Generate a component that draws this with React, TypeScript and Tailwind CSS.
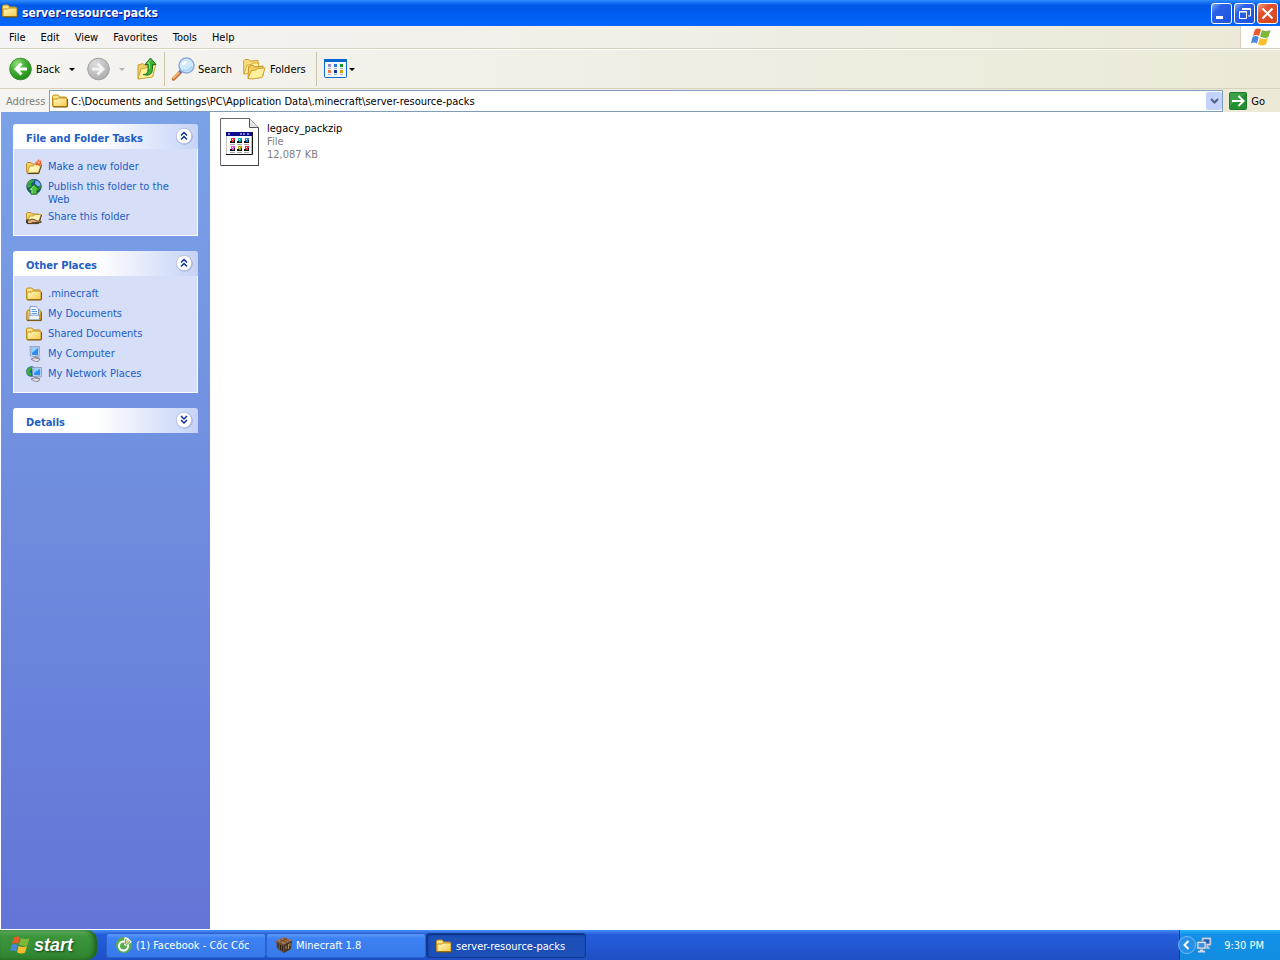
import type { ReactNode } from 'react';

function FolderIcon({ className = 'size-4' }: { className?: string }) {
  return (
    <svg viewBox="0 0 16 16" className={className} aria-hidden="true">
      <defs>
        <linearGradient id="folderFill" x1="0" y1="0" x2="1" y2="1">
          <stop offset="0" stopColor="#fffcc4" />
          <stop offset="1" stopColor="#f5c84c" />
        </linearGradient>
      </defs>
      <path d="M.5 13V3.500q0-1.500 1.500-1.500h3.500q1 0 1.500 1l.5 1h5.500q1.500 0 1.500 1.500V13z" fill="#fbe48a" stroke="#c08c14" />
      <path d="M1 13.500V7q0-1 1-1h3.500l1.300-1H14q1 0 1 1v7.500z" fill="url(#folderFill)" stroke="#c08c14" />
      <path d="M1.500 14h13.200q.8 0 .8-.8V6" fill="none" stroke="#7d5500" />
    </svg>
  );
}

function OpenFolder({ children }: { children?: ReactNode }) {
  return (
    <svg viewBox="0 0 16 16" className="size-4 shrink-0" aria-hidden="true">
      <path d="M.8 13.500L.5 4.500l1-1h3.500l1.500 1.500h6v8.500z" fill="#f5d36c" stroke="#b5851c" />
      <path d="M1.500 14L3.500 7h4l1-1.500h6.700L12.500 13.500z" fill="#fff5b0" stroke="#c29631" strokeWidth=".9" />
      <path d="M1.500 14.600h11.200L15.600 6" fill="none" stroke="#4a3d16" />
      {children}
    </svg>
  );
}

function NewFolderIcon() {
  return (
    <OpenFolder>
      <path d="M12.500 0l.9 2 2.200-.5-1 2 1.400 1.500-2 .4-.5 2-1.500-1.400-2 .6.600-2L9 3l2.300-.4z" fill="#f4511e" />
      <circle cx="12.700" cy="3.500" r="1.300" fill="#ffb36b" />
    </OpenFolder>
  );
}

function ShareFolderIcon() {
  return (
    <OpenFolder>
      <path d="M1 11h3l2-1 3.500 1 1.500 1h4v1.500H7L5 14.500H1z" fill="#e2ae78" stroke="#3d2c18" strokeWidth=".8" />
      <path d="M0 10.500h2v3.500H0z" fill="#3d3a3c" />
    </OpenFolder>
  );
}

function PublishIcon() {
  return (
    <svg viewBox="0 0 16 16" className="size-4 shrink-0" aria-hidden="true">
      <circle cx="8" cy="7.500" r="7.300" fill="#1c4f93" stroke="#143d63" strokeWidth=".7" />
      <path d="M3 2Q5 .5 8 .8L7.500 3 5 4.500 5.500 7 3 9 .9 8Q.5 4 3 2z" fill="#35a83a" />
      <path d="M9.500 1.200q4 1 5.300 5L12 7.500 9 5z" fill="#79b5ec" />
      <path d="M12 8l3-1.500q0 3-1.500 4.500z" fill="#2d9332" />
      <path d="M8 5.500l6 5.700h-3v4H5v-4H2z" fill="#4cc13c" stroke="#12651a" strokeWidth=".9" />
      <path d="M8 7L4.500 10.500H6V14.500" fill="none" stroke="#a6ea8c" strokeWidth=".9" />
    </svg>
  );
}

function DocumentsIcon() {
  return (
    <svg viewBox="0 0 16 16" className="size-4 shrink-0" aria-hidden="true">
      <path d="M.8 14V5.500L2.500 4H13.500l1.700 1.500V14z" fill="#f3c94f" stroke="#a87408" />
      <path d="M4 10V.6h6L12.500 3v7z" fill="#fff" stroke="#6b93c9" strokeWidth=".9" />
      <path d="M5.500 3.500h4.500M5.500 5.500h5.500M5.500 7.500h5.500" stroke="#4f9ae8" />
      <path d="M3 13.800V9.200h10.500v4.600z" fill="#f0f5fc" stroke="#6c8fba" strokeWidth=".8" />
      <path d="M1 14.600h14.300V6.500" fill="none" stroke="#7d5500" />
    </svg>
  );
}

function ComputerIcon({ globe = false }: { globe?: boolean }) {
  return (
    <svg viewBox="0 0 16 16" className="size-4 shrink-0" aria-hidden="true">
      {globe && (
        <>
          <circle cx="5.500" cy="5.500" r="5.300" fill="#1f59b0" />
          <path d="M1 3.500Q3 .5 6 .5L5 4 3.500 5.500l2 2L5 10Q1 9.500.3 6z" fill="#38b03c" />
        </>
      )}
      <path d={globe ? 'M6 1.500h9.500v9.500L7 10.500z' : 'M4 .6h9.500L13 11l-8.500-1z'} fill="#d3dcec" stroke="#8592ad" strokeWidth=".8" />
      <path d={globe ? 'M7.200 2.700h7v6.800l-6-.5z' : 'M5.300 1.800h7l-.4 7.700-6-.8z'} fill="#2e8df2" />
      <path d={globe ? 'M7.200 2.700h7L8 7z' : 'M5.300 1.800h7L5.900 7z'} fill="#8fd0ff" />
      <path d="M8 10.800l4.500.4v2l-4-.4z" fill="#8c93aa" />
      <path d="M5 13l3.500-1.200 5.500 1-1.500 2.400-3 .6z" fill="#e2dde2" stroke="#77707f" strokeWidth=".8" />
    </svg>
  );
}

function WindowsFlag({ className }: { className: string }) {
  return (
    <svg viewBox="0 0 20 18" className={className} aria-hidden="true">
      <path d="M4 1.500Q7-.5 10 1.500L8 8Q5 6.200 1.800 8z" fill="#e9592b" />
      <path d="M11 2Q15 4 19.500 2L17.500 9Q13.500 11 9 8.500z" fill="#7db83b" />
      <path d="M1.500 9Q4.500 7.200 7.700 9L6 15.500Q3 13.700 0 15.500z" fill="#4887dc" />
      <path d="M8.700 9.700Q12.500 12 17 10L15 16.500Q11 18.500 7 16.200z" fill="#f6bf2b" />
    </svg>
  );
}

function RoundArrow({ back = false }: { back?: boolean }) {
  return (
    <svg viewBox="0 0 24 24" className="size-6 shrink-0" aria-hidden="true">
      <defs>
        <radialGradient id="backFill" cx=".35" cy=".25" r=".8">
          <stop offset="0" stopColor="#8ede73" />
          <stop offset=".5" stopColor="#41ae32" />
          <stop offset="1" stopColor="#1a8b17" />
        </radialGradient>
        <radialGradient id="forwardFill" cx=".35" cy=".25" r=".8">
          <stop offset="0" stopColor="#dcdcdc" />
          <stop offset="1" stopColor="#adadad" />
        </radialGradient>
      </defs>
      <circle cx="12.500" cy="12" r="10.800" fill={back ? 'url(#backFill)' : 'url(#forwardFill)'} stroke={back ? '#3d8f34' : '#a0a0a0'} />
      <path
        d={back ? 'M19 12H8M13.500 6.500L8 12l5.500 5.500' : 'M6 12H17M11.500 6.500L17 12l-5.500 5.500'}
        fill="none"
        stroke={back ? '#fff' : '#f4f4f4'}
        strokeWidth="3"
      />
    </svg>
  );
}

function UpFolderIcon() {
  return (
    <svg viewBox="0 0 22 24" className="h-6 w-[22px]" aria-hidden="true">
      <path d="M2 22V8l5-1.500 2 2 8-1V19z" fill="#f2cf66" stroke="#c79c31" />
      <path d="M2 22L5 12l5-1 1.500-1.500 8-1L16.500 20z" fill="#fff0a0" stroke="#d1a63b" />
      <path d="M7 17.500q5 .5 5-5V7.500H9L14.500 1 20 7.500h-3.500v5q-.5 7.500-9.500 5z" fill="#3fb333" stroke="#1a7420" />
      <path d="M14.500 2.800L11.500 6.500h2v5.500" fill="none" stroke="#93e07a" />
    </svg>
  );
}

function SearchIcon() {
  return (
    <svg viewBox="0 0 24 24" className="size-6" aria-hidden="true">
      <path d="M10 14.500L2.500 22" stroke="#c4703a" strokeWidth="3.500" strokeLinecap="round" />
      <path d="M9.500 14L2.500 21" stroke="#fbb070" strokeWidth="2" strokeLinecap="round" />
      <path d="M11 12.500L8.500 15.500" stroke="#5c7cb5" strokeWidth="3" />
      <circle cx="15.500" cy="8.500" r="7.500" fill="#cfeafd" stroke="#8fa9dc" strokeWidth="1.500" />
      <path d="M10.500 9q0-5 6-5.500-1 4-6 5.500z" fill="#fff" />
      <path d="M12 13.200q6 2 9-4" fill="none" stroke="#a4d5f7" strokeWidth="1.500" />
    </svg>
  );
}

function FoldersIcon() {
  return (
    <svg viewBox="0 0 24 24" className="size-6" aria-hidden="true">
      <path d="M.8 17L.5 4 2 2.500h3.500l1.500 1.500 8-.5V14z" fill="#f9dc79" stroke="#cf9f2d" />
      <path d="M1 17L4 8l4.500-.5L10 6h6l-2 9z" fill="#fff2a8" stroke="#d5a834" />
      <path d="M5 21.500L5.500 9.500 10 8l2 2 8-1V19z" fill="#f2cb5c" stroke="#c5932a" />
      <path d="M5 21.500L8.500 13.500l4.500-.5 1.500-1.500 7.500-.5L19 20.500 9 22z" fill="#fff0a0" stroke="#cf9f2d" />
    </svg>
  );
}

function ViewsIcon() {
  return (
    <svg viewBox="0 0 23 20" className="h-5 w-[23px]" aria-hidden="true">
      <rect x=".5" y=".5" width="22" height="18" rx="1" fill="#f6f8fd" stroke="#0b68d1" />
      <path d="M0 0h23v3H0z" fill="#0b68d1" />
      <path d="M4 5h3v3H4z" fill="#9b8bd0" />
      <path d="M10 5h3v3h-3z" fill="#1f78dd" />
      <path d="M16 5h3v3h-3z" fill="#0b9a20" />
      <path d="M4 11h3v3H4z" fill="#ff7443" />
      <path d="M10 11h3v3h-3z" fill="#0c389d" />
      <path d="M16 11h3v3h-3z" fill="#d4a000" />
      <path d="M4 9.500h3m3 0h3m3 0h3M4 15.500h3m3 0h3m3 0h3" stroke="#a9b1bd" />
    </svg>
  );
}

function PackIcon() {
  const dots = ['#f02828', '#10b0b8', '#2080e8', '#f048f0', '#b8a818', '#f02840'];
  return (
    <svg viewBox="0 0 39 48" className="h-12 w-[39px]" aria-hidden="true">
      <path d="M.5.500h29l9 9v38H.5z" fill="#fff" stroke="#6a6a6a" />
      <path d="M29.500.5v9h9" fill="#e3e3e3" stroke="#555" />
      <path d="M38.500 10v37.500H1" fill="none" stroke="#444" />
      <path d="M6.500 14.500h25v22h-25z" fill="#fff" stroke="#c8c4bc" />
      <path d="M6 14h26v4H6z" fill="#0c0c8c" />
      <path d="M20 16h2m1 0h2m2 0h2M8 16h2" stroke="#fff" />
      <path d="M6 36.500h26.500V14" fill="none" stroke="#111" />
      {dots.map((color, i) => (
        <g key={color} transform={`translate(${10 + (i % 3) * 7} ${20 + Math.floor(i / 3) * 8})`}>
          <path d="M1 0h4v4H1z" fill={color} />
          <path d="M0 3h2v2H0zM2 4h3v1H2zM4 2h1v2H4z" fill="#111" />
          <path d="M2 1h1v1H2z" fill="#fff" />
          <path d="M0 6.500h5" stroke="#aaa" />
        </g>
      ))}
    </svg>
  );
}

function CocCocIcon() {
  return (
    <svg viewBox="0 0 16 16" className="size-4 shrink-0" aria-hidden="true">
      <circle cx="8" cy="8" r="8" fill="#58ad4b" />
      <circle cx="7.500" cy="9" r="4.500" fill="none" stroke="#fff" strokeWidth="2" />
      <path d="M8 8l.5-8L12 1l2 2 2 2-6 4z" fill="#fff" />
      <path d="M9 7l1-5M10 8l4-3.500" stroke="#68b552" strokeWidth="1.300" />
      <path d="M9.500 6.500L12.500 3" stroke="#eb7a32" />
    </svg>
  );
}

function CraftingTableIcon() {
  return (
    <svg viewBox="0 0 16 16" className="size-4 shrink-0" aria-hidden="true">
      <path d="M8 0l8 3.500-8 4L0 3.500z" fill="#a9744c" />
      <path d="M0 3.500l8 4V16l-7-4z" fill="#6d4f31" />
      <path d="M16 3.500l-8 4V16l7-4z" fill="#4c361f" />
      <path d="M4 2.500l7 3M7 1l6 3M11 1.500L4 5" stroke="#58361f" strokeWidth=".7" />
      <path d="M2 6.500v4M4.500 8v5M6.500 8.500V14" stroke="#2b2018" />
      <path d="M10 9v3M12.500 7v5M14 6v3" stroke="#a18a68" />
    </svg>
  );
}

function NetworkIcon() {
  return (
    <svg viewBox="0 0 16 16" className="size-4 shrink-0" aria-hidden="true">
      <path d="M6 .8h9v7.500H6z" fill="#d9e5f3" stroke="#8fa6c4" strokeWidth=".8" />
      <path d="M7.500 2.300h6v4.400h-6z" fill="#1f5fb0" />
      <path d="M10 8.500h2.500v2H14v1.300H9z" fill="#c3ccd7" />
      <path d="M1 4.500h9v7.500H1z" fill="#e9f0f8" stroke="#7088a8" strokeWidth=".8" />
      <path d="M2.500 6h6v4.500H2.500z" fill="#3c8fdf" />
      <path d="M4 12.500h3v1.300h2v1.600H2v-1.600h2z" fill="#d4dbe4" />
    </svg>
  );
}

function DropArrow({ disabled = false }: { disabled?: boolean }) {
  return (
    <svg viewBox="0 0 6 3" className="h-[3px] w-1.5 shrink-0" aria-hidden="true">
      <path d="M0 0h6L3 3z" fill={disabled ? '#b5b2a6' : '#000'} />
    </svg>
  );
}

function CaptionButton({ label, close = false, children }: { label: string; close?: boolean; children: ReactNode }) {
  return (
    <button
      type="button"
      aria-label={label}
      className={
        'size-[21px] rounded-[3px] border border-white ' +
        (close
          ? 'bg-linear-to-br from-[#f0a088] via-[#e2532f] via-30% to-[#d0451c]'
          : 'bg-linear-to-br from-[#7fa5f5] via-[#2b60e8] via-30% to-[#1f52dc]')
      }
    >
      <svg viewBox="0 0 19 19" className="size-[19px]" fill="none" stroke="#fff" aria-hidden="true">
        {children}
      </svg>
    </button>
  );
}

function TaskPanel({ title, collapsed = false, children }: { title: string; collapsed?: boolean; children?: ReactNode }) {
  return (
    <section>
      <h2>
        <button
          type="button"
          aria-expanded={!collapsed}
          className="flex h-[25px] w-full items-center justify-between rounded-t-[3px] bg-linear-to-r from-white from-45% to-[#c6d3f7] pr-[5px] pl-[13px] text-[11px] font-bold text-[#215dc6]"
        >
          <span className="pt-[3px]">{title}</span>
          <svg viewBox="0 0 18 18" className="mb-0.5 size-[18px]" fill="none" aria-hidden="true">
            <circle cx="9.500" cy="9.500" r="8.300" fill="#a3afd4" />
            <circle cx="9" cy="9" r="7.700" fill="#fff" stroke="#b4bede" strokeWidth=".8" />
            <path
              d={collapsed ? 'M6 5l3 3 3-3M6 9l3 3 3-3' : 'M6 8.500l3-3 3 3M6 12.500l3-3 3 3'}
              stroke="#0d2f91"
              strokeWidth="1.500"
            />
          </svg>
        </button>
      </h2>
      {!collapsed && (
        <ul className="flex flex-col gap-[3px] border border-t-0 border-white bg-[#d6dff7] pt-2.5 pr-2 pb-[9px] pl-3">
          {children}
        </ul>
      )}
    </section>
  );
}

function TaskLink({ icon, children }: { icon: ReactNode; children: ReactNode }) {
  return (
    <li>
      <a href="#" className="flex min-h-[17px] items-start gap-1.5 text-[#215dc6]">
        {icon}
        <span className="max-w-[124px] pt-px">{children}</span>
      </a>
    </li>
  );
}

function TaskButton({ icon, active = false, children }: { icon: ReactNode; active?: boolean; children: ReactNode }) {
  return (
    <button
      type="button"
      aria-pressed={active}
      className={
        'flex h-[25px] w-40 items-center gap-1 rounded-[3px] border px-[9px] text-white ' +
        (active
          ? 'border-[#123a92] bg-[#1c4fb8] pt-0.5 shadow-[inset_1px_1px_2px_#0b2f80]'
          : 'border-[#2b62d0] bg-linear-to-b from-[#5a97fb] via-[#3c81f3] via-20% to-[#3779ea]')
      }
    >
      {icon}
      <span className="truncate">{children}</span>
    </button>
  );
}

export default function App() {
  const menus = ['File', 'Edit', 'View', 'Favorites', 'Tools', 'Help'];

  return (
    <div className="flex min-h-screen flex-col bg-white font-['DejaVu_Sans_Condensed','DejaVu_Sans',sans-serif] text-[11px] leading-[13px] text-black">
      <header className="flex h-[26px] items-center justify-between bg-linear-to-b from-[#2f8cff] via-[#0058e6] via-20% to-[#0066ff] px-0.5">
        <div className="flex items-center gap-1">
          <FolderIcon className="mb-1 size-4" />
          <h1 className="text-xs font-bold text-white [text-shadow:1px_1px_#0f1089]">server-resource-packs</h1>
        </div>
        <div className="flex gap-0.5">
          <CaptionButton label="Minimize">
            <path d="M4 13.500h7" strokeWidth="3" />
          </CaptionButton>
          <CaptionButton label="Restore">
            <path d="M4.500 7.500h7v7h-7zM4 8h8" />
            <path d="M7 4.500h8.500V12H13M7 5.500h8" />
          </CaptionButton>
          <CaptionButton label="Close" close>
            <path d="M4.500 4.500l10 10M14.500 4.500l-10 10" strokeWidth="2" />
          </CaptionButton>
        </div>
      </header>

      <nav className="flex h-[23px] justify-between border-b border-[#d8d2bd] bg-linear-to-r from-[#f5f4f4] to-[#ece9d8]">
        <div className="flex items-center gap-[15px] pl-[9px]">
          {menus.map((menu) => (
            <button key={menu} type="button">
              {menu}
            </button>
          ))}
        </div>
        <div className="flex w-10 items-center justify-center border-l border-[#d8d2bd] bg-white">
          <WindowsFlag className="h-[18px] w-5" />
        </div>
      </nav>

      <div className="flex h-10 items-center border-t border-b border-t-white border-b-[#d8d2bd] bg-linear-to-r from-[#f5f4f1] to-[#ece9d8] pl-2">
        <button type="button" className="flex w-[67px] items-center gap-1">
          <RoundArrow back />
          <span className="grow text-left">Back</span>
          <DropArrow />
        </button>
        <button type="button" aria-label="Forward" disabled className="ml-[11px] flex items-center gap-[9px]">
          <RoundArrow />
          <DropArrow disabled />
        </button>
        <button type="button" aria-label="Up" className="ml-[11px]">
          <UpFolderIcon />
        </button>
        <div className="ml-1.5 h-[34px] w-px bg-[#cbc5ad]" />
        <button type="button" className="ml-1.5 flex w-[72px] items-center gap-[3px]">
          <SearchIcon />
          Search
        </button>
        <button type="button" className="flex w-[73px] items-center gap-[3px]">
          <FoldersIcon />
          Folders
        </button>
        <div className="h-[34px] w-px bg-[#cbc5ad]" />
        <button type="button" aria-label="Views" className="ml-[7px] flex items-center gap-0.5">
          <ViewsIcon />
          <DropArrow />
        </button>
      </div>

      <div className="flex h-[23px] items-center bg-linear-to-r from-[#f5f4f1] to-[#ece9d8] pr-[15px] pl-1.5">
        <label htmlFor="address" className="w-[43px] pt-px text-[#7f7c73]">
          Address
        </label>
        <div className="flex h-[22px] grow items-center border border-[#7f9db9] bg-white pl-0.5">
          <FolderIcon />
          <input
            id="address"
            type="text"
            className="ml-[3px] min-w-0 grow pt-0.5 outline-none"
            defaultValue="C:\Documents and Settings\PC\Application Data\.minecraft\server-resource-packs"
          />
          <button
            type="button"
            aria-label="Show addresses"
            className="flex h-[18px] w-4 items-center justify-center rounded-[2px] bg-[#c3d3fd]"
          >
            <svg viewBox="0 0 9 6" className="h-1.5 w-[9px]" fill="none" stroke="#4d6185" strokeWidth="2" aria-hidden="true">
              <path d="M1 1l3.500 3.500L8 1" />
            </svg>
          </button>
        </div>
        <button type="button" className="ml-1.5 flex items-center gap-1">
          <svg viewBox="0 0 18 18" className="size-[18px]" aria-hidden="true">
            <rect x=".5" y=".5" width="17" height="17" rx="1" fill="#22902f" stroke="#207b2e" />
            <path d="M1 1h16L1 14z" fill="#56b25d" opacity=".5" />
            <path d="M3 9h11M9.500 4l5 5-5 5" fill="none" stroke="#fff" strokeWidth="2" />
          </svg>
          <span className="pt-px">Go</span>
        </button>
      </div>

      <div className="flex grow">
        <aside className="ml-px flex w-[209px] flex-col gap-[15px] bg-linear-to-b from-[#7ba2e7] to-[#6375d6] p-3">
          <TaskPanel title="File and Folder Tasks">
            <TaskLink icon={<NewFolderIcon />}>Make a new folder</TaskLink>
            <TaskLink icon={<PublishIcon />}>Publish this folder to the Web</TaskLink>
            <TaskLink icon={<ShareFolderIcon />}>Share this folder</TaskLink>
          </TaskPanel>
          <TaskPanel title="Other Places">
            <TaskLink icon={<FolderIcon />}>.minecraft</TaskLink>
            <TaskLink icon={<DocumentsIcon />}>My Documents</TaskLink>
            <TaskLink icon={<FolderIcon />}>Shared Documents</TaskLink>
            <TaskLink icon={<ComputerIcon />}>My Computer</TaskLink>
            <TaskLink icon={<ComputerIcon globe />}>My Network Places</TaskLink>
          </TaskPanel>
          <TaskPanel title="Details" collapsed />
        </aside>
        <main className="grow px-2.5 py-1.5">
          <button type="button" className="flex items-start gap-2 text-left">
            <PackIcon />
            <span className="flex flex-col pt-1 text-[#808080]">
              <span className="text-black">legacy_packzip</span>
              <span>File</span>
              <span>12,087 KB</span>
            </span>
          </button>
        </main>
      </div>

      <footer className="mt-px flex h-[30px] items-stretch bg-linear-to-b from-[#4a8cf5] via-[#245edb] via-15% to-[#1f4fc4]">
        <button
          type="button"
          className="flex w-[97px] items-center gap-1 rounded-r-[10px] bg-linear-to-b from-[#6bb86b] via-[#3c963c] via-20% to-[#2f842f] pl-2.5 shadow-[inset_-3px_0_4px_#1d611d]"
        >
          <WindowsFlag className="h-[18px] w-5" />
          <span className="font-['Liberation_Sans',sans-serif] text-lg font-bold text-white italic [text-shadow:1px_1px_2px_#174517]">
            start
          </span>
        </button>
        <div className="flex grow items-center pl-[9px]">
          <TaskButton icon={<CocCocIcon />}>(1) Facebook - Cốc Cốc</TaskButton>
          <TaskButton icon={<CraftingTableIcon />}>Minecraft 1.8</TaskButton>
          <TaskButton icon={<FolderIcon className="size-4 shrink-0" />} active>
            server-resource-packs
          </TaskButton>
        </div>
        <div className="flex w-[101px] items-center border-l border-[#0d3f96] bg-linear-to-b from-[#27b4f6] via-[#1290e8] via-15% to-[#128de0] text-white">
          <button type="button" aria-label="Show hidden icons" className="-ml-0.5">
            <svg viewBox="0 0 18 18" className="size-[18px]" aria-hidden="true">
              <circle cx="9" cy="9" r="8.500" fill="#2590e6" stroke="#8bc6f5" strokeWidth=".8" />
              <path d="M10.500 5L6.500 9l4 4" fill="none" stroke="#fff" strokeWidth="2" />
            </svg>
          </button>
          <NetworkIcon />
          <time className="grow pr-4 text-right">9:30 PM</time>
        </div>
      </footer>
    </div>
  );
}
